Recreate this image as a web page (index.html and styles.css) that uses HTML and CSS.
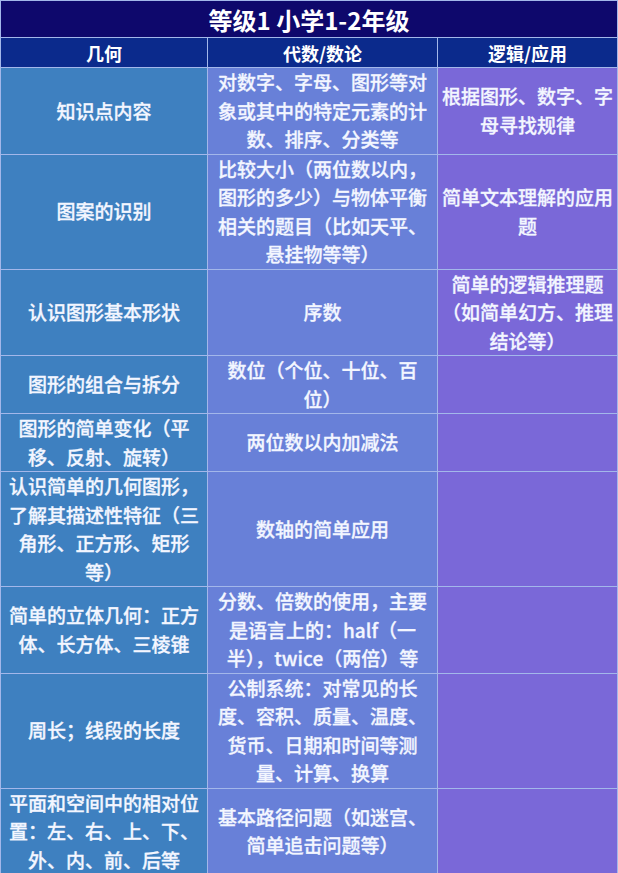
FILE: index.html
```html
<!DOCTYPE html>
<html lang="zh-CN">
<head>
<meta charset="utf-8">
<title>等级1 小学1-2年级</title>
<link rel="stylesheet" href="styles.css">
</head>
<body>
<div class="table">
  <div class="title">等级1 小学1-2年级</div>

  <div class="head">几何</div>
  <div class="head">代数/数论</div>
  <div class="head">逻辑/应用</div>

  <div class="cell c1">知识点内容</div>
  <div class="cell c2">对数字、字母、图形等对<br>象或其中的特定元素的计<br>数、排序、分类等</div>
  <div class="cell c3">根据图形、数字、字<br>母寻找规律</div>

  <div class="cell c1">图案的识别</div>
  <div class="cell c2">比较大小（两位数以内，<br>图形的多少）与物体平衡<br>相关的题目（比如天平、<br>悬挂物等等）</div>
  <div class="cell c3">简单文本理解的应用<br>题</div>

  <div class="cell c1">认识图形基本形状</div>
  <div class="cell c2">序数</div>
  <div class="cell c3">简单的逻辑推理题<br>（如简单幻方、推理<br>结论等）</div>

  <div class="cell c1">图形的组合与拆分</div>
  <div class="cell c2">数位（个位、十位、百<br>位）</div>
  <div class="cell c3"></div>

  <div class="cell c1">图形的简单变化（平<br>移、反射、旋转）</div>
  <div class="cell c2">两位数以内加减法</div>
  <div class="cell c3"></div>

  <div class="cell c1">认识简单的几何图形，<br>了解其描述性特征（三<br>角形、正方形、矩形<br>等）</div>
  <div class="cell c2">数轴的简单应用</div>
  <div class="cell c3"></div>

  <div class="cell c1">简单的立体几何：正方<br>体、长方体、三棱锥</div>
  <div class="cell c2">分数、倍数的使用，主要<br>是语言上的：half（一<br>半），twice（两倍）等</div>
  <div class="cell c3"></div>

  <div class="cell c1">周长；线段的长度</div>
  <div class="cell c2">公制系统：对常见的长<br>度、容积、质量、温度、<br>货币、日期和时间等测<br>量、计算、换算</div>
  <div class="cell c3"></div>

  <div class="cell c1">平面和空间中的相对位<br>置：左、右、上、下、<br>外、内、前、后等</div>
  <div class="cell c2">基本路径问题（如迷宫、<br>简单追击问题等）</div>
  <div class="cell c3"></div>
</div>
</body>
</html>
```
FILE: styles.css
```css
html, body {
  margin: 0;
  padding: 0;
  background: #7a68d8;
}

body {
  width: 618px;
  height: 873px;
  overflow: hidden;
  font-family: "Noto Sans CJK SC", "Noto Sans", sans-serif;
  color: #f3f6ff;
}

.table {
  display: grid;
  grid-template-columns: 206px 229px 1fr;
  gap: 1px;
  padding: 1px;
  background: #a3b7ea;
}

.title {
  grid-column: 1 / -1;
  height: 36px;
  background: #0e086c;
  color: #ffffff;
  font-size: 24px;
  font-weight: 700;
  display: flex;
  align-items: center;
  justify-content: center;
}

.head {
  height: 29px;
  background: #0b2a8c;
  color: #ffffff;
  font-size: 18px;
  font-weight: 700;
  display: flex;
  align-items: center;
  justify-content: center;
}

.cell {
  font-size: 19px;
  font-weight: 500;
  -webkit-text-stroke: 0.3px #f3f6ff;
  line-height: 28.5px;
  min-height: 57px;
  white-space: nowrap;
  text-align: center;
  display: flex;
  align-items: center;
  justify-content: center;
}

.c1 { background: #3e80c0; }
.c2 { background: #6880d8; }
.c3 { background: #7a68d8; }
```
